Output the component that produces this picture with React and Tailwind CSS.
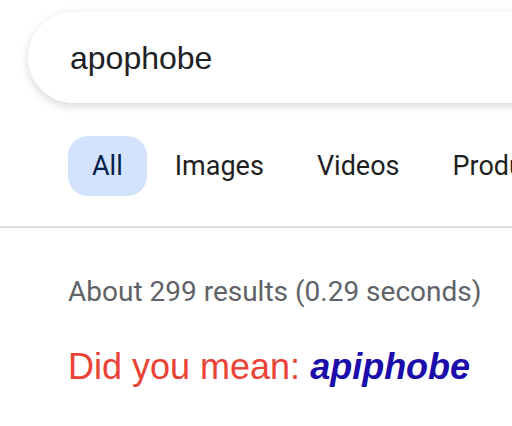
const tabs = ['All', 'Images', 'Videos', 'Products'];

export default function App() {
  return (
    <div className="h-[426px] w-[512px] overflow-hidden bg-white">
      <div className="pl-[28px] pt-[12px]">
        <div className="flex h-[91px] w-[560px] items-center rounded-l-full bg-white pl-[42px] shadow-[0_3px_10px_rgba(32,33,36,0.18)]">
          <span className="font-['Liberation_Sans',Arial,sans-serif] text-[32px] text-[#202124]">apophobe</span>
        </div>
      </div>

      <div className="flex gap-[3px] overflow-hidden whitespace-nowrap pl-[68px] pt-[33px] pb-[30px]">
        {tabs.map((tab) => (
          <div
            key={tab}
            className={
              tab === 'All'
                ? 'flex h-[60px] shrink-0 items-center rounded-[20px] bg-[#d3e3fd] px-[24px] text-[#041e49]'
                : 'flex h-[60px] shrink-0 items-center px-[25px] text-[#1f1f1f]'
            }
          >
            <span className="font-['Roboto',sans-serif] text-[27px]">{tab}</span>
          </div>
        ))}
      </div>

      <div className="h-[2px] bg-[#dadce0]" />

      <div className="pl-[68px] pt-[48px]">
        <p className="font-['Roboto',sans-serif] text-[28px] leading-[32px] text-[#5f6368]">
          About 299 results (0.29 seconds)
        </p>
        <p className="mt-[39px] font-['Liberation_Sans',Arial,sans-serif] text-[36px] leading-[40px] text-[#ea4335]">
          Did you mean: <a className="font-bold italic text-[#1a0dab]">apiphobe</a>
        </p>
      </div>
    </div>
  );
}
